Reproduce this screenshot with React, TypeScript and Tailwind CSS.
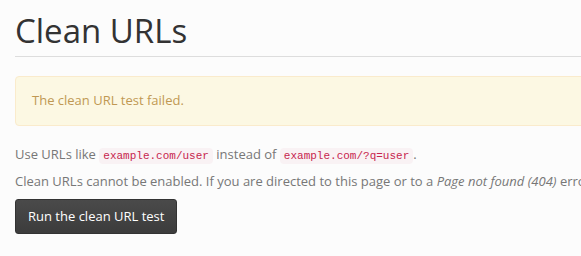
export default function App() {
  return (
    <div
      className="w-[581px] h-[256px] overflow-hidden bg-[#fcfcfc] pl-[15px] text-[13px] text-[#777]"
      style={{ fontFamily: '"Open Sans", "Noto Sans", sans-serif' }}
    >
      <h1 className="pt-[12px] pb-[7px] text-[33px] leading-[37px] font-normal text-[#333] border-b border-[#ddd] whitespace-nowrap">
        Clean URLs
      </h1>

      <div className="mt-[19px] h-[50px] -mr-[10px] flex items-center px-[16px] bg-[#fcf8e3] border border-[#faebcc] rounded-[4px] text-[#c09853]">
        The clean URL test failed.
      </div>

      <p className="mt-[18px] whitespace-nowrap leading-[20px]">
        Use URLs like{" "}
        <code className="px-[4px] py-[2px] rounded-[4px] bg-[#f9f2f4] text-[#c7254e] text-[11px]" style={{ fontFamily: '"Liberation Mono", "DejaVu Sans Mono", monospace' }}>
          example.com/user
        </code>{" "}
        instead of{" "}
        <code className="px-[4px] py-[2px] rounded-[4px] bg-[#f9f2f4] text-[#c7254e] text-[11px]" style={{ fontFamily: '"Liberation Mono", "DejaVu Sans Mono", monospace' }}>
          example.com/?q=user
        </code>
        .
      </p>

      <p className="mt-[5px] whitespace-nowrap leading-[20px]">
        Clean URLs cannot be enabled. If you are directed to this page or to a{" "}
        <em>Page not found (404)</em> error after testing for clean URLs, see the
        online handbook.
      </p>

      <button className="mt-[8px] h-[35px] px-[12px] rounded-[3px] border border-[#333] bg-gradient-to-b from-[#4a4a4a] to-[#3c3c3c] text-white text-[13px]">
        Run the clean URL test
      </button>
    </div>
  );
}
